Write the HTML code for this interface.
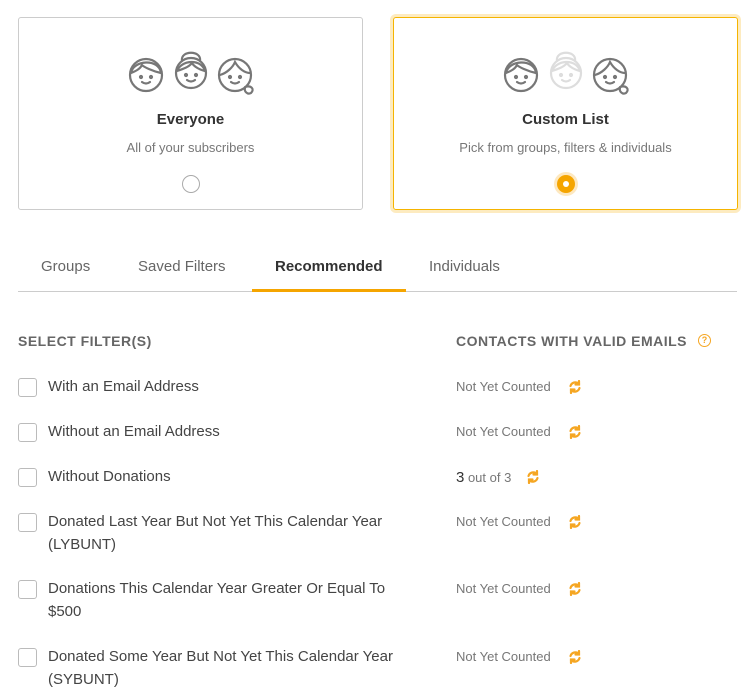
<!DOCTYPE html>
<html><head><style>
body{margin:0;width:751px;height:680px;overflow:hidden;background:#fff;font-family:"Liberation Sans",sans-serif;color:#444;position:relative}
.card{position:absolute;top:17px;width:345px;height:193px;border:1px solid #ccc;border-radius:3px;box-sizing:border-box;text-align:center}
.card.sel{border:1px solid #f5b400;box-shadow:0 0 0 3px #fdebc0}
.title{position:absolute;top:93px;left:0;width:100%;font-size:15px;font-weight:bold;color:#333}
.sub{position:absolute;top:122px;left:0;width:100%;font-size:13px;color:#777}
.radio{position:absolute;left:50%;top:157px;margin-left:-9px;width:16px;height:16px;border:1px solid #aaa;border-radius:50%}
.faces{position:absolute;top:31px;left:50%;margin-left:-65px}
.abs{position:absolute}
.tab{position:absolute;top:258px;font-size:15px;color:#666}
.cb{position:absolute;left:18px;width:17px;height:17px;border:1px solid #bbb;border-radius:3px}
.lbl{position:absolute;left:48px;font-size:15px;color:#444;line-height:23px;width:362px}
.cnt{position:absolute;left:456px;font-size:13px;color:#777}
.ref{position:absolute;left:568px}
</style></head><body>
<svg width="0" height="0" style="position:absolute"><defs>
<g id="boy" fill="none" stroke-width="2.2" stroke-linecap="round"><circle cx="18" cy="22" r="16"/><path d="M3 20 C5 7 31 5 33 20 C24 18 16 14 14 12 C12 16 8 18 3 20"/><circle cx="13" cy="24" r="1"/><circle cx="23" cy="24" r="1"/><path d="M14 29 Q18 32 22 29"/></g>
<g id="girl" fill="none" stroke-width="2.2" stroke-linecap="round"><circle cx="18" cy="24" r="15"/><path d="M9 12 C7 1 29 1 27 12"/><path d="M4 22 C8 11 28 9 32 22 C24 20 20 16 19 14 C16 18 10 20 4 22"/><circle cx="13" cy="26" r="1"/><circle cx="23" cy="26" r="1"/><path d="M14 31 Q18 34 22 31"/></g>
<g id="wom" fill="none" stroke-width="2.2" stroke-linecap="round"><circle cx="18" cy="22" r="16"/><path d="M3 22 C10 20 16 14 18 9 C22 16 28 20 33 20"/><path d="M28 34 C34 32 38 36 34 40 C30 42 27 38 28 35"/><circle cx="13" cy="24" r="1"/><circle cx="23" cy="24" r="1"/><path d="M14 29 Q18 32 22 29"/></g>
<g id="ref" fill="none" stroke="#f5a623" stroke-width="2.2" stroke-linecap="round"><path d="M2.5 6 A5 5 0 0 1 11 4"/><path d="M11.5 8 A5 5 0 0 1 3 10"/><path d="M11 1 V4.5 H7.5" /><path d="M3 13 V9.5 H6.5"/></g>
</defs></svg>

<div class="card" style="left:18px">
<svg class="faces" width="130" height="48" viewBox="0 0 130 48"><use href="#boy" x="2" y="4" stroke="#777"/><use href="#girl" x="47" y="0" stroke="#777"/><use href="#wom" x="91" y="4" stroke="#777"/></svg>
<div class="title">Everyone</div><div class="sub">All of your subscribers</div><div class="radio"></div></div>

<div class="card sel" style="left:393px">
<svg class="faces" width="130" height="48" viewBox="0 0 130 48"><use href="#boy" x="2" y="4" stroke="#777"/><use href="#girl" x="47" y="0" stroke="#ddd"/><use href="#wom" x="91" y="4" stroke="#777"/></svg>
<div class="title">Custom List</div><div class="sub">Pick from groups, filters &amp; individuals</div>
<div class="radio" style="border:none;background:#f5a500;width:18px;height:18px;box-shadow:0 0 0 3px #fde8c0"><div style="position:absolute;left:6px;top:6px;width:6px;height:6px;border-radius:50%;background:#fff"></div></div></div>

<div class="tab" style="left:41px">Groups</div>
<div class="tab" style="left:138px">Saved Filters</div>
<div class="tab" style="left:275px;color:#333;font-weight:bold">Recommended</div>
<div class="tab" style="left:429px">Individuals</div>
<div class="abs" style="left:18px;top:291px;width:719px;height:1px;background:#ccc"></div>
<div class="abs" style="left:252px;top:289px;width:154px;height:3px;background:#f5a500"></div>

<div class="abs" style="left:18px;top:333px;font-size:14px;font-weight:bold;color:#666;letter-spacing:.5px">SELECT FILTER(S)</div>
<div class="abs" style="left:456px;top:333px;font-size:14px;font-weight:bold;color:#666;letter-spacing:.5px">CONTACTS WITH VALID EMAILS</div>
<div class="abs" style="left:698px;top:334px;width:11px;height:11px;border:1.5px solid #f5a623;border-radius:50%;color:#f5a623;font-size:9px;line-height:11px;text-align:center;font-weight:bold">?</div>

<div class="cb" style="top:378px"></div><div class="lbl" style="top:375px">With an Email Address</div>
<div class="cnt" style="top:379px">Not Yet Counted</div><svg class="ref" style="top:380px" width="14" height="14"><use href="#ref"/></svg>
<div class="cb" style="top:423px"></div><div class="lbl" style="top:420px">Without an Email Address</div>
<div class="cnt" style="top:424px">Not Yet Counted</div><svg class="ref" style="top:425px" width="14" height="14"><use href="#ref"/></svg>
<div class="cb" style="top:468px"></div><div class="lbl" style="top:465px">Without Donations</div>
<div class="cnt" style="top:469px"><span style="font-size:15px;color:#333">3</span> out of 3</div><svg class="ref" style="left:526px;top:470px" width="14" height="14"><use href="#ref"/></svg>
<div class="cb" style="top:513px"></div><div class="lbl" style="top:510px">Donated Last Year But Not Yet This Calendar Year (LYBUNT)</div>
<div class="cnt" style="top:514px">Not Yet Counted</div><svg class="ref" style="top:515px" width="14" height="14"><use href="#ref"/></svg>
<div class="cb" style="top:580px"></div><div class="lbl" style="top:577px">Donations This Calendar Year Greater Or Equal To<br>$500</div>
<div class="cnt" style="top:581px">Not Yet Counted</div><svg class="ref" style="top:582px" width="14" height="14"><use href="#ref"/></svg>
<div class="cb" style="top:648px"></div><div class="lbl" style="top:645px">Donated Some Year But Not Yet This Calendar Year (SYBUNT)</div>
<div class="cnt" style="top:649px">Not Yet Counted</div><svg class="ref" style="top:650px" width="14" height="14"><use href="#ref"/></svg>
</body></html>
